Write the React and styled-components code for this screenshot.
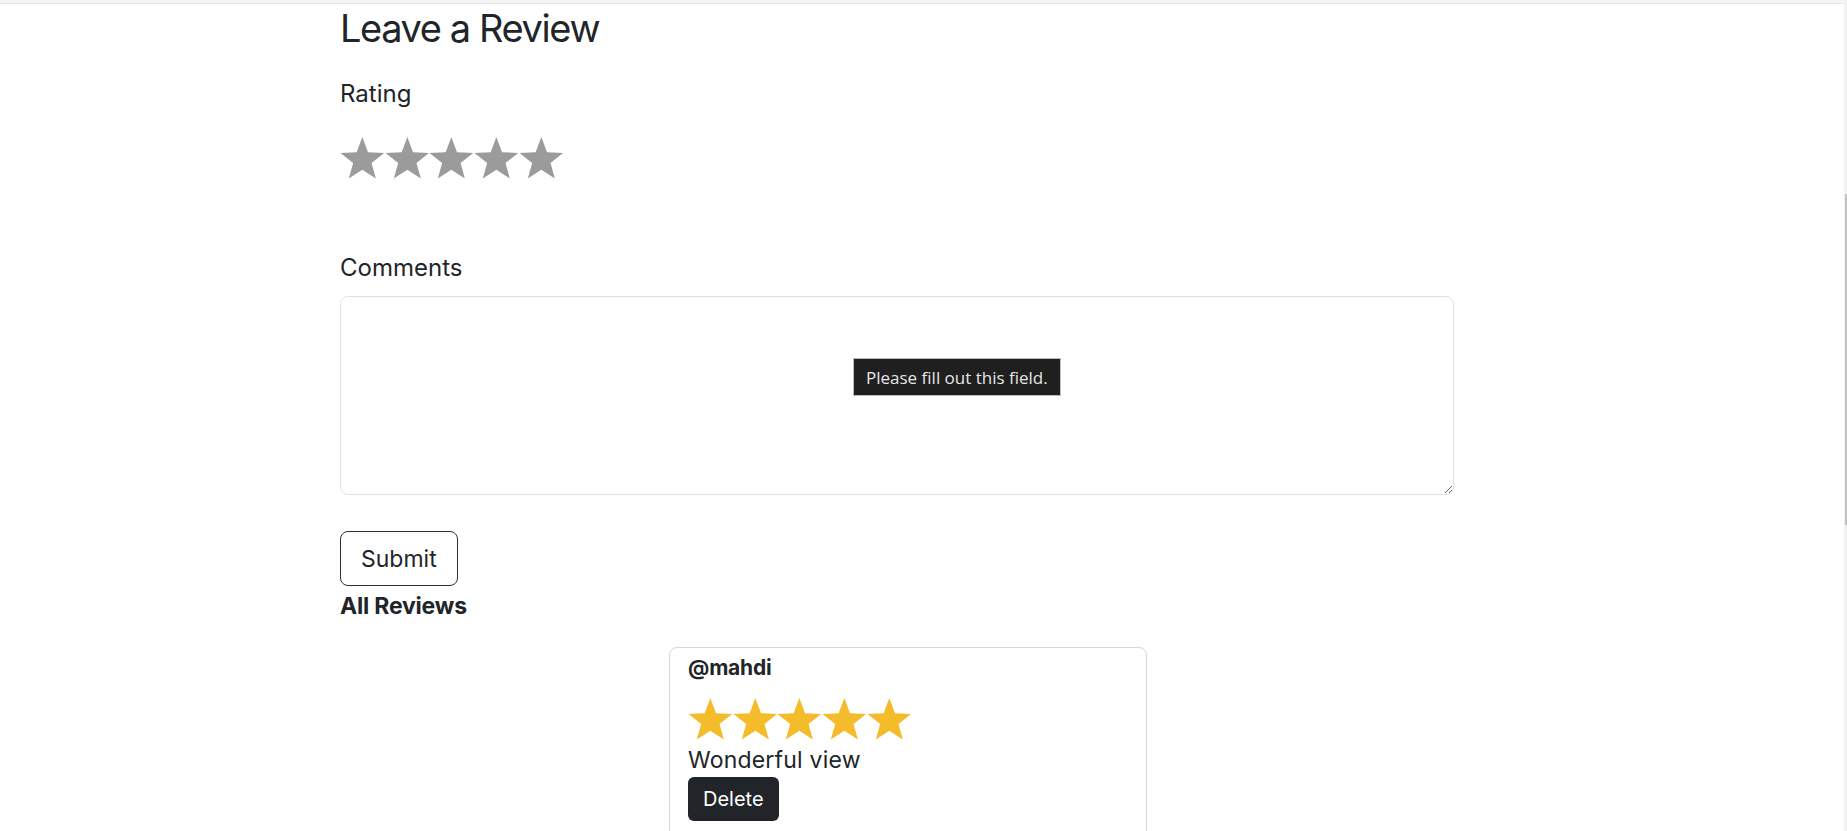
import React from "react";
import styled, { createGlobalStyle } from "styled-components";

const GlobalStyle = createGlobalStyle`
  html, body {
    margin: 0;
    padding: 0;
    overflow: hidden;
    background: #ffffff;
  }
  body {
    font-family: Inter, "Noto Sans", sans-serif;
    color: #212529;
  }
  * {
    box-sizing: border-box;
  }
`;

// 별 하나
const Star = ({ color }) => (
  <StarSvg viewBox="0 0 44.7 42" fill={color}>
    <polygon points="22.35,0 28.03,15.18 44.22,15.89 31.54,25.99 35.87,41.61 22.35,32.66 8.83,41.61 13.16,25.99 0.48,15.89 16.67,15.18" />
  </StarSvg>
);

const Stars = ({ count, filled, color }) => (
  <StarRow>
    {Array.from({ length: count }).map((_, i) => (
      <Star key={i} color={i < filled ? color : "#9b9b9b"} />
    ))}
  </StarRow>
);

const reviews = [{ user: "mahdi", rating: 5, text: "Wonderful view" }];

const App = () => {
  return (
    <>
      <GlobalStyle />
      <StTopBar />
      <StMain>
        <StTitle>Leave a Review</StTitle>

        <StLabel>Rating</StLabel>
        <StRatingWrap>
          <Stars count={5} filled={0} color="#9b9b9b" />
        </StRatingWrap>

        <StLabel $top={71}>Comments</StLabel>
        <StFieldWrap>
          <StTextarea required />
          <StTooltip>Please fill out this field.</StTooltip>
        </StFieldWrap>

        <StSubmit type="button">Submit</StSubmit>
        <StSubTitle>All Reviews</StSubTitle>

        {reviews.map((r) => (
          <StCard key={r.user}>
            <StUser>@{r.user}</StUser>
            <StCardStars>
              <Stars count={5} filled={r.rating} color="#f4bc2b" />
            </StCardStars>
            <StComment>{r.text}</StComment>
            <StDelete type="button">Delete</StDelete>
          </StCard>
        ))}
      </StMain>
      <StScrollTrack>
        <StScrollThumb />
      </StScrollTrack>
    </>
  );
};

/* STYLED-COMPONENTS */

const StTopBar = styled.div`
  height: 4px;
  margin-right: 3px;
  background: #f4f5f7;
  border-bottom: 1px solid #e2e4e8;
`;

const StMain = styled.main`
  padding-left: 340px;
  width: 1454px;
  height: 900px;
`;

const StTitle = styled.h1`
  margin: 0;
  font-size: 38px;
  font-weight: 400;
  line-height: 48px;
  letter-spacing: -1.4px;
`;

const StLabel = styled.div`
  margin-top: ${(p) => p.$top || 24}px;
  font-size: 24px;
  line-height: 36px;
  letter-spacing: 0;
`;

const StRatingWrap = styled.div`
  margin-top: 25px;
`;

const StarRow = styled.div`
  display: flex;
`;

const StarSvg = styled.svg`
  display: block;
  width: 44.7px;
  height: 42px;
  flex: none;
`;

const StFieldWrap = styled.div`
  position: relative;
  margin-top: 10px;
`;

const StTextarea = styled.textarea`
  display: block;
  width: 1114px;
  height: 199px;
  padding: 6px 12px;
  border: 1px solid #dee2e6;
  border-radius: 8px;
  font-family: Inter, sans-serif;
  font-size: 16px;
  outline: none;
`;

const StTooltip = styled.div`
  position: absolute;
  left: 513px;
  top: 62px;
  height: 38px;
  padding: 0 12px;
  display: flex;
  align-items: center;
  background: #1f1f1f;
  border: 1px solid #bdbdbd;
  color: #e6e6e6;
  font-family: "Open Sans", "Noto Sans", sans-serif;
  font-size: 17px;
  white-space: nowrap;
`;

const StSubmit = styled.button`
  display: block;
  margin-top: 36px;
  height: 55px;
  padding: 0 20px;
  background: #ffffff;
  color: #212529;
  border: 1px solid #2b2f33;
  border-radius: 8px;
  font-family: Inter, sans-serif;
  font-size: 23px;
  letter-spacing: 0;
`;

const StSubTitle = styled.h5`
  margin: 2px 0 0;
  font-size: 23px;
  font-weight: 700;
  line-height: 36px;
  letter-spacing: -0.2px;
`;

const StCard = styled.div`
  margin-top: 23px;
  margin-left: 329px;
  width: 478px;
  padding: 7px 18px 30px;
  border: 1px solid #d6d6d6;
  border-radius: 8px;
`;

const StUser = styled.div`
  font-size: 21px;
  font-weight: 700;
  line-height: 26px;
  letter-spacing: -0.2px;
`;

const StCardStars = styled.div`
  margin-top: 17px;
`;

const StComment = styled.p`
  margin: 6px 0 0;
  font-size: 23px;
  line-height: 29px;
  letter-spacing: 0.2px;
`;

const StDelete = styled.button`
  display: block;
  margin-top: 2px;
  height: 44px;
  padding: 0 15px;
  background: #212529;
  color: #ffffff;
  border: none;
  border-radius: 6px;
  font-family: Inter, sans-serif;
  font-size: 20px;
  letter-spacing: 0;
`;

const StScrollTrack = styled.div`
  position: fixed;
  top: 0;
  right: 0;
  width: 3px;
  height: 100vh;
  background: #f1f1f1;
`;

const StScrollThumb = styled.div`
  position: absolute;
  top: 194px;
  right: 0;
  width: 2px;
  height: 331px;
  background: #c1c1c1;
`;

export default App;
